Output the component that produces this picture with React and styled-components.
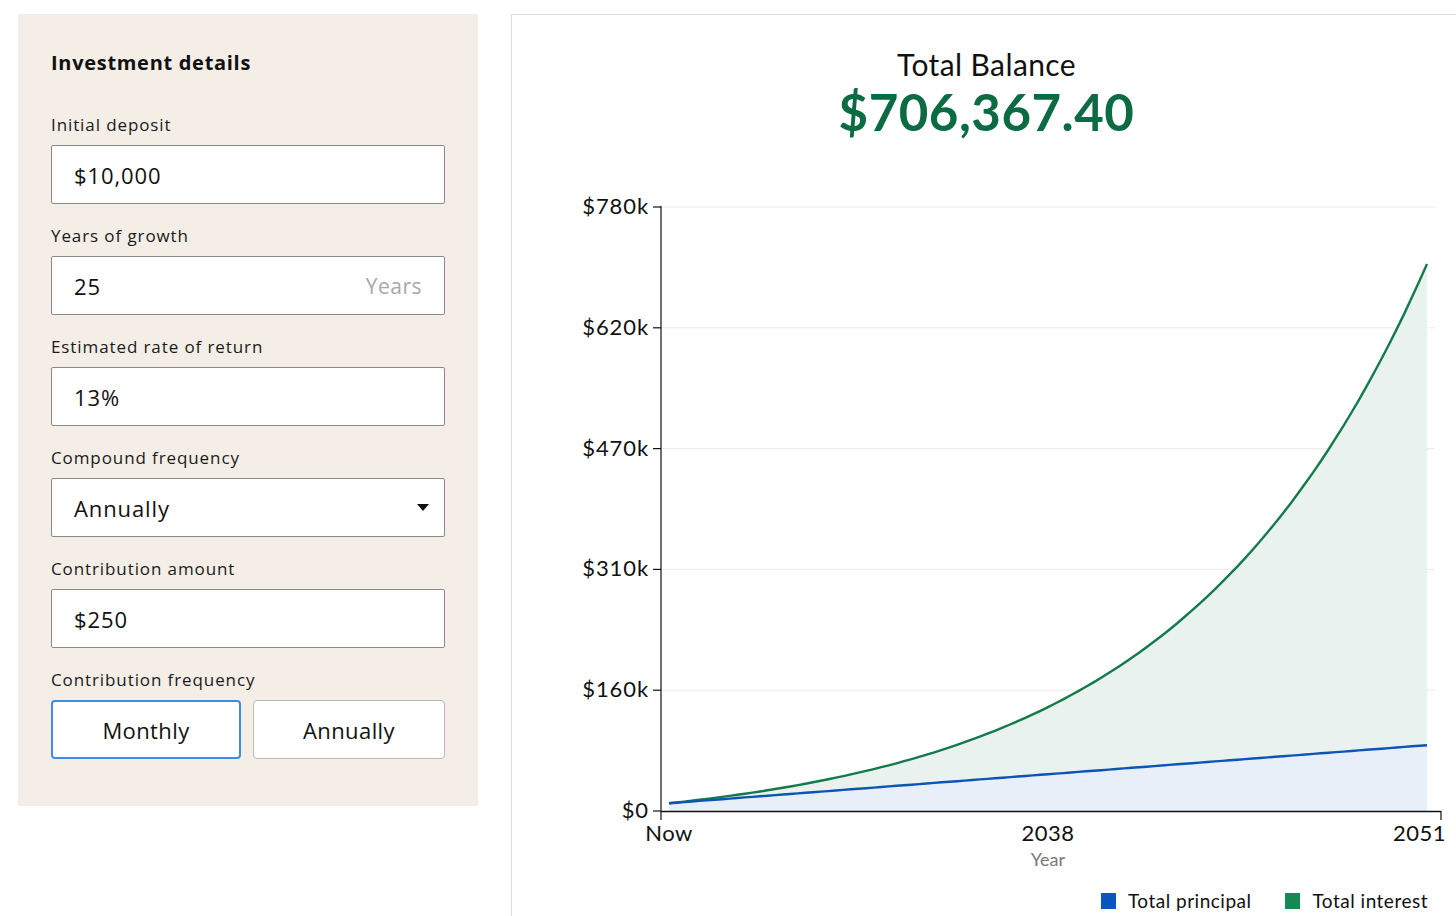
import styled, { createGlobalStyle } from "styled-components";

const GlobalStyle = createGlobalStyle`
  body {
    margin: 0;
    background: #ffffff;
    color: #111;
    font-family: "Open Sans", "Noto Sans", sans-serif;
  }
`;

const Page = styled.div`
  display: flex;
  align-items: flex-start;
  width: 1456px;
  height: 916px;
  overflow: hidden;
`;

const Panel = styled.section`
  box-sizing: border-box;
  width: 460px;
  height: 792px;
  margin: 14px 0 0 18px;
  padding: 37px 33px 0;
  background: #f4eee7;
  display: flex;
  flex-direction: column;
`;

const PanelTitle = styled.h2`
  margin: 0 0 40px;
  font-size: 20px;
  line-height: 24px;
  font-weight: 700;
  letter-spacing: 0.7px;
`;

const Field = styled.div`
  display: flex;
  flex-direction: column;
  gap: 10px;
  margin-bottom: 22px;
`;

const Label = styled.label`
  font-size: 17px;
  line-height: 20px;
  letter-spacing: 0.9px;
  color: #1a1a1a;
`;

const InputBox = styled.div`
  box-sizing: border-box;
  height: 59px;
  display: flex;
  align-items: center;
  justify-content: space-between;
  padding: 0 22px 0 22px;
  background: #fff;
  border: 1px solid #8a8a8a;
  border-radius: 2px;
  font-size: 22px;
  letter-spacing: 0.9px;
  color: #111;
`;

const Suffix = styled.span`
  color: #a8a8a8;
  font-size: 21px;
  letter-spacing: 0.5px;
`;

const Caret = styled.span`
  width: 0;
  height: 0;
  border-left: 6px solid transparent;
  border-right: 6px solid transparent;
  border-top: 7px solid #111;
  margin-right: -7px;
`;

const Toggle = styled.div`
  display: grid;
  grid-template-columns: 190px 192px;
  gap: 12px;
`;

const ToggleButton = styled.button`
  box-sizing: border-box;
  height: 59px;
  background: #fff;
  border: ${(p) => (p.$active ? "2px solid #3a8ee6" : "1px solid #b8b8b8")};
  border-radius: 4px;
  font-family: "Open Sans", "Noto Sans", sans-serif;
  font-size: 22px;
  letter-spacing: 0.4px;
  color: #111;
`;

const Card = styled.section`
  flex: 1;
  box-sizing: border-box;
  height: 902px;
  margin: 14px 0 0 33px;
  border-top: 1px solid #dcdcdc;
  border-left: 1px solid #dcdcdc;
  display: flex;
  flex-direction: column;
  font-family: "Lato", sans-serif;
`;

const Header = styled.div`
  height: 165px;
  padding-top: 33px;
  box-sizing: border-box;
  text-align: center;
  padding-left: 5px;
`;

const BalanceLabel = styled.div`
  font-size: 30px;
  line-height: 33px;
  letter-spacing: 0.4px;
  color: #111;
`;

const BalanceValue = styled.div`
  font-size: 51px;
  line-height: 62px;
  font-weight: 700;
  color: #0b6b43;
  letter-spacing: 0.5px;
`;

const ChartSvg = styled.svg`
  display: block;
  font-family: "Lato", sans-serif;
`;

const Legend = styled.div`
  display: flex;
  justify-content: flex-end;
  gap: 34px;
  padding-right: 28px;
  margin-top: 9px;
`;

const LegendItem = styled.div`
  display: flex;
  align-items: center;
  gap: 12px;
  font-size: 19px;
  letter-spacing: 0.5px;
  color: #111;
`;

const Swatch = styled.span`
  width: 15px;
  height: 16px;
  background: ${(p) => p.$color};
`;

// chart drawn in page coordinates, shifted into the svg
const X0 = 669;
const X1 = 1427;
const AXIS_Y = 811;
const TOP_Y = 207;
const MAX = 780000;
const yOf = (v) => AXIS_Y - (v / MAX) * (AXIS_Y - TOP_Y);

const rawBalance = (t) =>
  10000 * Math.pow(1.13, t) + 3000 * 1.0596 * ((Math.pow(1.13, t) - 1) / 0.13);
const scale = 706367.4 / rawBalance(25);

const points = [];
for (let i = 0; i <= 100; i++) {
  const t = (i / 100) * 25;
  const x = X0 + ((X1 - X0) * t) / 25;
  const bal = t === 0 ? 10000 : rawBalance(t) * scale;
  points.push({ x, bal, prin: 10000 + 3000 * t });
}

const line = (key) =>
  points.map((p, i) => `${i ? "L" : "M"}${p.x.toFixed(1)},${yOf(p[key]).toFixed(1)}`).join(" ");

const greenLine = line("bal");
const blueLine = line("prin");
const greenArea = `${greenLine} L${X1},${AXIS_Y} L${X0},${AXIS_Y} Z`;
const blueArea = `${blueLine} L${X1},${AXIS_Y} L${X0},${AXIS_Y} Z`;

const ticks = [
  { v: 780000, label: "$780k" },
  { v: 624000, label: "$620k" },
  { v: 468000, label: "$470k" },
  { v: 312000, label: "$310k" },
  { v: 156000, label: "$160k" },
  { v: 0, label: "$0" },
];

const Chart = () => (
  <ChartSvg width="944" height="700" viewBox="0 0 944 700">
    <g transform="translate(-512,-180)">
      {ticks.map((t) => (
        <g key={t.label}>
          {t.v > 0 && (
            <line x1="661" x2="1435" y1={yOf(t.v)} y2={yOf(t.v)} stroke="#ebebeb" strokeWidth="1" />
          )}
          <line x1="653" x2="661" y1={yOf(t.v)} y2={yOf(t.v)} stroke="#111" strokeWidth="1.2" />
          <text
            x="649"
            y={yOf(t.v) + 7}
            textAnchor="end"
            fontSize="22"
            letterSpacing="0.9"
            fill="#111"
          >
            {t.label}
          </text>
        </g>
      ))}
      <path d={greenArea} fill="#e9f2ee" />
      <path d={blueArea} fill="#e8eff8" />
      <path d={greenLine} fill="none" stroke="#137a4a" strokeWidth="2.4" />
      <path d={blueLine} fill="none" stroke="#0b55b5" strokeWidth="2.4" />
      <line x1="661" x2="661" y1="206" y2="820" stroke="#111" strokeWidth="1.2" />
      <line x1="661" x2="1441" y1={AXIS_Y + 0.5} y2={AXIS_Y + 0.5} stroke="#111" strokeWidth="1.4" />
      <line x1="1441" x2="1441" y1={AXIS_Y} y2="820" stroke="#111" strokeWidth="1.2" />
      <text x="669" y="841" textAnchor="middle" fontSize="22" letterSpacing="0.5" fill="#111">Now</text>
      <text x="1048" y="841" textAnchor="middle" fontSize="22" letterSpacing="0.5" fill="#111">2038</text>
      <text x="1446" y="841" textAnchor="end" fontSize="22" letterSpacing="0.5" fill="#111">2051</text>
      <text x="1048" y="866" textAnchor="middle" fontSize="18" fill="#777">Year</text>
    </g>
  </ChartSvg>
);

const App = () => (
  <Page>
    <GlobalStyle />
    <Panel>
      <PanelTitle>Investment details</PanelTitle>
      <Field>
        <Label>Initial deposit</Label>
        <InputBox>$10,000</InputBox>
      </Field>
      <Field>
        <Label>Years of growth</Label>
        <InputBox>
          <span>25</span>
          <Suffix>Years</Suffix>
        </InputBox>
      </Field>
      <Field>
        <Label>Estimated rate of return</Label>
        <InputBox>13%</InputBox>
      </Field>
      <Field>
        <Label>Compound frequency</Label>
        <InputBox>
          <span>Annually</span>
          <Caret />
        </InputBox>
      </Field>
      <Field>
        <Label>Contribution amount</Label>
        <InputBox>$250</InputBox>
      </Field>
      <Field>
        <Label>Contribution frequency</Label>
        <Toggle>
          <ToggleButton $active>Monthly</ToggleButton>
          <ToggleButton>Annually</ToggleButton>
        </Toggle>
      </Field>
    </Panel>
    <Card>
      <Header>
        <BalanceLabel>Total Balance</BalanceLabel>
        <BalanceValue>$706,367.40</BalanceValue>
      </Header>
      <Chart />
      <Legend>
        <LegendItem>
          <Swatch $color="#0b55c0" />
          Total principal
        </LegendItem>
        <LegendItem>
          <Swatch $color="#138a55" />
          Total interest
        </LegendItem>
      </Legend>
    </Card>
  </Page>
);

export default App;
